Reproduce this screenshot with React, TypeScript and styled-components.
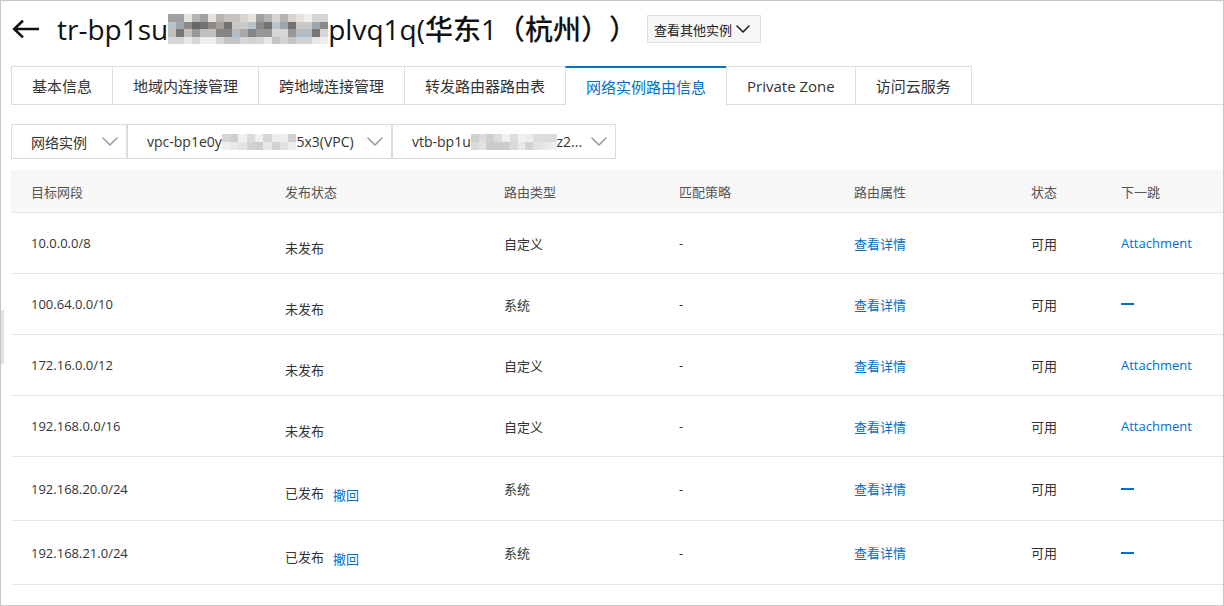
import React from "react";
import styled, { createGlobalStyle } from "styled-components";

const GlobalStyle = createGlobalStyle`
  html, body {
    margin: 0;
    padding: 0;
    background: #fff;
  }
  body {
    font-family: "Open Sans", "Noto Sans CJK SC", sans-serif;
    color: #333;
    text-spacing-trim: space-all;
  }
`;

// Styled Components
const Page = styled.div`
  position: relative;
  width: 1224px;
  height: 606px;
  box-sizing: border-box;
  border: 1px solid #c6c6c6;
  overflow: hidden;
  background: #fff;
`;

const EdgeHandle = styled.div`
  position: absolute;
  left: 0;
  top: 309px;
  width: 3px;
  height: 54px;
  background: #e2e2e2;
`;

const TitleRow = styled.div`
  display: flex;
  align-items: center;
  height: 36px;
  margin-top: 10px;
  padding-left: 11px;
`;

const Title = styled.h1`
  display: flex;
  align-items: center;
  margin: 0 0 0 18px;
  font-size: 28px;
  font-weight: 500;
  line-height: 36px;
  color: #111;
  white-space: nowrap;
  text-spacing-trim: space-all;
`;

const SwitchButton = styled.button`
  display: flex;
  align-items: center;
  gap: 4px;
  height: 28px;
  margin-left: 10px;
  padding: 0 10px 0 6px;
  border: 1px solid #dcdcdc;
  background: #f6f6f6;
  font-family: "Open Sans", "Noto Sans CJK SC", sans-serif;
  font-size: 13px;
  color: #222;
`;

const Content = styled.div`
  padding-left: 10px;
`;

const TabBar = styled.div`
  display: flex;
  margin-top: 19px;
  border-bottom: 1px solid #dddddd;
`;

const Tab = styled.div<{ $active?: boolean }>`
  display: flex;
  align-items: center;
  box-sizing: border-box;
  height: ${(p) => (p.$active ? "39px" : "38px")};
  margin-bottom: ${(p) => (p.$active ? "-1px" : "0")};
  padding: 0 20px;
  border-left: 1px solid #dddddd;
  border-top: ${(p) => (p.$active ? "2px solid #0070cc" : "1px solid #dddddd")};
  background: #fff;
  font-size: 15px;
  color: ${(p) => (p.$active ? "#0070cc" : "#333")};
  &:last-child {
    border-right: 1px solid #dddddd;
  }
`;

const FilterRow = styled.div`
  display: flex;
  margin-top: 19px;
`;

const Select = styled.div<{ $w: number }>`
  display: flex;
  align-items: center;
  justify-content: space-between;
  box-sizing: border-box;
  width: ${(p) => p.$w}px;
  height: 35px;
  padding: 0 8px 0 19px;
  border: 1px solid #dcdcdc;
  font-size: 14px;
  color: #333;
`;

const SelectText = styled.span`
  display: flex;
  align-items: center;
  white-space: nowrap;
`;

const Table = styled.div`
  margin-top: 11px;
`;

const columns = "254px 219px 175px 175px 177px 90px 1fr";

const HeadRow = styled.div`
  display: grid;
  grid-template-columns: ${columns};
  align-items: center;
  height: 42px;
  background: #f7f7f7;
  border-bottom: 1px solid #e6e6e6;
  font-size: 13px;
  color: #555;
`;

const Row = styled.div<{ $tall?: boolean }>`
  display: grid;
  grid-template-columns: ${columns};
  align-items: center;
  height: ${(p) => (p.$tall ? "63px" : "60px")};
  border-bottom: 1px solid #e6e6e6;
  font-size: 13px;
  color: #333;
`;

const Cell = styled.div`
  padding-left: 20px;
  white-space: nowrap;
`;

const StatusCell = styled(Cell)`
  display: flex;
  align-items: center;
  padding-top: 8px;
`;

const Link = styled.span`
  color: #0070cc;
  cursor: pointer;
`;

const Revoke = styled(Link)`
  margin-left: 9px;
  padding-top: 4px;
`;

const Dash = styled.div`
  width: 13px;
  height: 2px;
  margin-left: 20px;
  background: #0070cc;
`;

const MosaicGrid = styled.span<{ $cols: number; $cw: number; $ch: number }>`
  display: inline-grid;
  grid-template-columns: repeat(${(p) => p.$cols}, ${(p) => p.$cw}px);
  grid-auto-rows: ${(p) => p.$ch}px;
`;

const MosaicCell = styled.span<{ $c: string }>`
  background: ${(p) => p.$c};
`;

const Mosaic: React.FC<{
  cols: number;
  rows: number;
  cw: number;
  ch: number;
  palette: string[][];
  seed: number;
}> = ({ cols, rows, cw, ch, palette, seed }) => {
  let s = seed;
  const rnd = () => {
    s = (s * 9301 + 49297) % 233280;
    return s / 233280;
  };
  const cells: string[] = [];
  for (let r = 0; r < rows; r++) {
    const pal = palette[Math.min(r, palette.length - 1)];
    for (let c = 0; c < cols; c++) {
      cells.push(pal[Math.floor(rnd() * pal.length)]);
    }
  }
  return (
    <MosaicGrid $cols={cols} $cw={cw} $ch={ch}>
      {cells.map((c, i) => (
        <MosaicCell key={i} $c={c} />
      ))}
    </MosaicGrid>
  );
};

const titlePalette = [
  ["#e6e2de", "#d8d4d0", "#b4b4b4", "#c7c2be", "#efefef", "#a0a0a0"],
  ["#b9c3cb", "#8c8a88", "#747270", "#a59e98", "#c9c9c9", "#666666", "#9ea7ad"],
  ["#a8a8a8", "#858585", "#c4beb8", "#767676", "#b3bcc2", "#979797", "#d6d6d6"],
  ["#e4e8ea", "#d6d6d6", "#cdd3d6", "#eeeeee", "#c4c4c4"],
];

const lightPalette = [
  ["#ececec", "#e2e2e2", "#d6d6d6", "#f0f0f0", "#dcdcdc", "#cfcfcf"],
  ["#e8e8e8", "#dadada", "#eeeeee", "#d2d2d2", "#e0e3e5", "#cccccc"],
];

const Chevron: React.FC<{ color?: string; w?: number; h?: number; sw?: number }> = ({
  color = "#999",
  w = 16,
  h = 9,
  sw = 1.5,
}) => (
  <svg width={w} height={h} viewBox={`0 0 ${w} ${h}`} fill="none">
    <polyline
      points={`1,1 ${w / 2},${h - 1} ${w - 1},1`}
      stroke={color}
      strokeWidth={sw}
      strokeLinecap="round"
      strokeLinejoin="round"
    />
  </svg>
);

const BackArrow = () => (
  <svg width="27" height="18" viewBox="0 0 27 18" fill="none">
    <path
      d="M26 9H3M10 1.5L2.2 9L10 16.5"
      stroke="#111"
      strokeWidth="2.6"
      strokeLinecap="square"
    />
  </svg>
);

type Route = {
  cidr: string;
  published: boolean;
  type: string;
  next: string | null;
};

const routes: Route[] = [
  { cidr: "10.0.0.0/8", published: false, type: "自定义", next: "Attachment" },
  { cidr: "100.64.0.0/10", published: false, type: "系统", next: null },
  { cidr: "172.16.0.0/12", published: false, type: "自定义", next: "Attachment" },
  { cidr: "192.168.0.0/16", published: false, type: "自定义", next: "Attachment" },
  { cidr: "192.168.20.0/24", published: true, type: "系统", next: null },
  { cidr: "192.168.21.0/24", published: true, type: "系统", next: null },
];

const tabs = [
  "基本信息",
  "地域内连接管理",
  "跨地域连接管理",
  "转发路由器路由表",
  "网络实例路由信息",
  "Private Zone",
  "访问云服务",
];

const headers = ["目标网段", "发布状态", "路由类型", "匹配策略", "路由属性", "状态", "下一跳"];

const App: React.FC = () => {
  return (
    <Page>
      <GlobalStyle />
      <EdgeHandle />
      <TitleRow>
        <BackArrow />
        <Title>
          <span>tr-bp1su</span>
          <Mosaic cols={20} rows={4} cw={8} ch={7.5} palette={titlePalette} seed={17} />
          <span>plvq1q(华东1（杭州））</span>
        </Title>
        <SwitchButton>
          查看其他实例
          <Chevron color="#222" w={14} h={8} sw={1.6} />
        </SwitchButton>
      </TitleRow>
      <Content>
        <TabBar>
          {tabs.map((t, i) => (
            <Tab key={t} $active={i === 4}>
              {t}
            </Tab>
          ))}
        </TabBar>
        <FilterRow>
          <Select $w={116}>
            <SelectText>网络实例</SelectText>
            <Chevron />
          </Select>
          <Select $w={265}>
            <SelectText>
              vpc-bp1e0y
              <Mosaic cols={9} rows={2} cw={8.3} ch={8} palette={lightPalette} seed={5} />
              5x3(VPC)
            </SelectText>
            <Chevron />
          </Select>
          <Select $w={224}>
            <SelectText>
              vtb-bp1u
              <Mosaic cols={11} rows={2} cw={7.8} ch={8} palette={lightPalette} seed={42} />
              z2...
            </SelectText>
            <Chevron />
          </Select>
        </FilterRow>
        <Table>
          <HeadRow>
            {headers.map((h) => (
              <Cell key={h}>{h}</Cell>
            ))}
          </HeadRow>
          {routes.map((r) => (
            <Row key={r.cidr} $tall={r.published}>
              <Cell>{r.cidr}</Cell>
              <StatusCell>
                {r.published ? "已发布" : "未发布"}
                {r.published && <Revoke>撤回</Revoke>}
              </StatusCell>
              <Cell>{r.type}</Cell>
              <Cell>-</Cell>
              <Cell>
                <Link>查看详情</Link>
              </Cell>
              <Cell>可用</Cell>
              {r.next ? (
                <Cell>
                  <Link>{r.next}</Link>
                </Cell>
              ) : (
                <Dash />
              )}
            </Row>
          ))}
        </Table>
      </Content>
    </Page>
  );
};

export default App;
